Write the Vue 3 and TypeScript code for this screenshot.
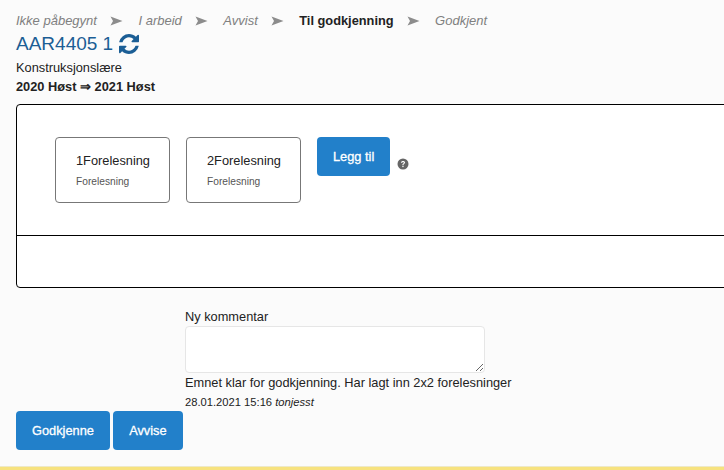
<script setup lang="ts">
const stages = [
  { name: 'Ikke påbegynt', active: false },
  { name: 'I arbeid', active: false },
  { name: 'Avvist', active: false },
  { name: 'Til godkjenning', active: true },
  { name: 'Godkjent', active: false },
]
const cards = ['1Forelesning', '2Forelesning']
</script>

<template>
  <div class="page">
    <div class="stages">
      <template v-for="(s, i) in stages" :key="s.name">
        <span :class="s.active ? 'stage active' : 'stage'">{{ s.name }}</span>
        <svg v-if="i < stages.length - 1" class="arrow" width="13" height="10" viewBox="0 0 13 10">
          <path d="M0.5 0.5 L12.5 5 L0.5 9.5 L3 5 Z" fill="#8c8c8c" />
        </svg>
      </template>
    </div>
    <h1 class="title">
      AAR4405 1
      <svg class="refresh" width="20" height="20" viewBox="0 0 1536 1536">
        <path fill="#1b5e95" d="M1511 928q0 5-1 7-64 268-268 434.500t-478 166.500q-146 0-282.500-55t-243.500-157l-129 129q-19 19-45 19t-45-19-19-45v-448q0-26 19-45t45-19h448q26 0 45 19t19 45-19 45l-137 137q71 66 161 102t187 36q134 0 250-65t186-179q11-17 53-117 8-23 30-23h192q13 0 22.500 9.500t9.500 22.500zM1536 128v448q0 26-19 45t-45 19h-448q-26 0-45-19t-19-45 19-45l138-138q-148-137-349-137-134 0-250 65t-186 179q-11 17-53 117-8 23-30 23h-199q-13 0-22.500-9.500t-9.500-22.500v-7q65-268 270-434.500t480-166.500q146 0 284 55.500t245 156.500l130-129q19-19 45-19t45 19 19 45z" />
      </svg>
    </h1>
    <div class="course">Konstruksjonslære</div>
    <div class="semester">2020 Høst ⇒ 2021 Høst</div>

    <div class="panel">
      <div class="panel-top">
        <div v-for="c in cards" :key="c" class="card">
          <div class="card-title">{{ c }}</div>
          <div class="card-sub">Forelesning</div>
        </div>
        <button class="btn add">Legg til</button>
        <svg class="help" width="12" height="12" viewBox="0 0 12 12">
          <circle cx="6" cy="6" r="5.5" fill="#666" />
          <path d="M3.9 4.6 C4 3.4 4.9 2.9 6 2.9 C7.2 2.9 8.1 3.6 8.1 4.6 C8.1 5.9 6.5 5.9 6.5 7.1 H5.3 C5.3 5.4 6.8 5.4 6.8 4.7 C6.8 4.3 6.5 4.1 6 4.1 C5.5 4.1 5.2 4.3 5.1 4.9 Z" fill="#fbfbfb" />
          <rect x="5.3" y="7.7" width="1.3" height="1.4" fill="#fbfbfb" />
        </svg>
      </div>
      <div class="panel-bottom"></div>
    </div>

    <div class="comments">
      <label class="comment-label">Ny kommentar</label>
      <textarea class="comment-box"></textarea>
      <div class="comment-text">Emnet klar for godkjenning. Har lagt inn 2x2 forelesninger</div>
      <div class="comment-meta">28.01.2021 15:16 <em>tonjesst</em></div>
    </div>

    <div class="actions">
      <button class="btn">Godkjenne</button>
      <button class="btn reject">Avvise</button>
    </div>
  </div>
  <div class="footer"></div>
</template>

<style>
html, body { margin: 0; overflow: hidden; background: #fbfbfb; }
</style>

<style scoped>
.page {
  box-sizing: border-box;
  height: 466px;
  width: 724px;
  padding: 13px 0 0 16px;
  overflow: hidden;
  font-family: "Liberation Sans", Arial, sans-serif;
  color: #222;
}
.stages {
  display: flex;
  align-items: center;
  height: 15px;
  font-size: 13px;
  line-height: 15px;
}
.stage { font-style: italic; color: #808080; }
.stage.active { font-style: normal; font-weight: 700; color: #222; font-size: 12.8px; }
.arrow { margin: 0 15px 0 13.5px; }
.title {
  display: flex;
  align-items: center;
  gap: 6px;
  margin: 4px 0 0;
  height: 24px;
  font-size: 19px;
  font-weight: 400;
  line-height: 24px;
  color: #1b5e95;
}
.refresh { flex: none; }
.course { margin-top: 2px; font-size: 12.8px; line-height: 19px; }
.semester { font-size: 12.8px; line-height: 19px; font-weight: 700; }
.panel {
  box-sizing: border-box;
  width: 760px;
  height: 184px;
  margin-top: 8px;
  background: #fff;
  border: 1px solid #000;
  border-radius: 4px;
}
.panel-top {
  display: flex;
  align-items: flex-start;
  gap: 16px;
  box-sizing: border-box;
  height: 131px;
  padding: 32px 0 0 38px;
  border-bottom: 1px solid #000;
}
.panel-bottom { height: 51px; }
.card {
  box-sizing: border-box;
  width: 115px;
  height: 66px;
  padding: 14px 20px 0;
  border: 1px solid #777;
  border-radius: 4px;
}
.card-title { font-size: 12.8px; line-height: 17px; }
.card-sub { margin-top: 7px; font-size: 10.2px; line-height: 12px; color: #555; }
.btn {
  box-sizing: border-box;
  height: 39px;
  padding: 0 16px;
  background: #2280ca;
  border: 0;
  border-radius: 4px;
  color: #fff;
  font-family: inherit;
  font-size: 12.8px;
  font-weight: 400;
  -webkit-text-stroke: 0.3px #fff;
}
.reject { width: 70px; padding: 0; }
.add { margin-right: -9px; }
.help { margin-top: 21px; }
.comments {
  display: flex;
  flex-direction: column;
  align-items: flex-start;
  margin: 21px 0 0 169px;
}
.comment-label { font-size: 12.8px; line-height: 16px; }
.comment-box {
  box-sizing: border-box;
  display: block;
  width: 300px;
  height: 47px;
  margin: 1px 0 0;
  padding: 4px;
  background: #fff;
  border: 1px solid #e6e6e6;
  border-radius: 4px;
  outline: 0;
}
.comment-text { margin-top: 2px; font-size: 12.8px; line-height: 16px; }
.comment-meta { margin-top: 4px; font-size: 11.2px; line-height: 14px; }
.actions { display: flex; gap: 3px; margin-top: 2px; }
.footer {
  height: 4px;
  background: #f7e27e;
  border-top: 1px solid #eee9c8;
  box-sizing: border-box;
}
</style>
